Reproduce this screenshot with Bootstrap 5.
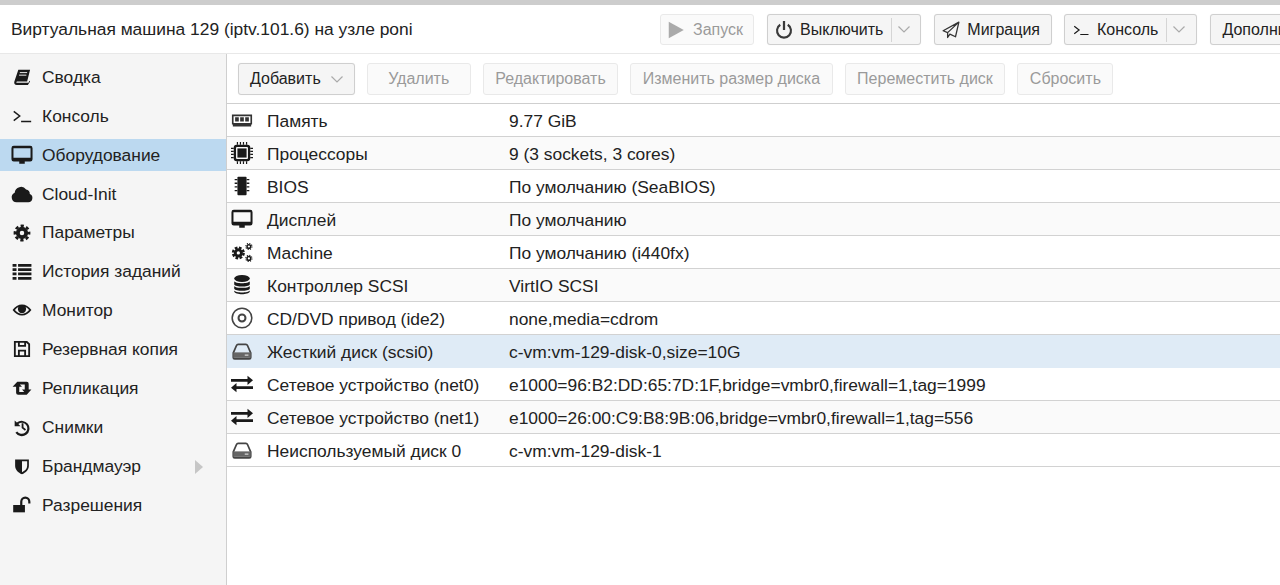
<!DOCTYPE html>
<html lang="ru">
<head>
<meta charset="utf-8">
<title>Виртуальная машина 129</title>
<link href="https://cdn.jsdelivr.net/npm/bootstrap@5.3.0/dist/css/bootstrap.min.css" rel="stylesheet">
<style>
html,body{height:585px;overflow:hidden}
body{font-family:"Liberation Sans",Arial,sans-serif;font-size:17.4px;color:#202020;background:#fff;border-top:5px solid #cdcdcd;display:flex;flex-direction:column}
.ic{width:22px;height:22px;flex:none;fill:#1a1a1a}
.head-bar{height:49px;border-bottom:1px solid #e8e8e8;padding:9px 0 8px 11px;white-space:nowrap;overflow:hidden;flex:none}
.head-title{width:649px;flex:none;color:#222}
.top-actions{gap:13px}
.px-btn{font-size:16px;height:31px;padding:0 11px;border:1px solid #cfcfcf;border-radius:3px;background:#f5f5f5;color:#222;display:inline-flex;align-items:center;justify-content:center;gap:7px;flex:none;white-space:nowrap;box-shadow:0 0 1px rgba(0,0,0,.1)}
.px-btn.with-ic{padding-left:7px}
.px-btn.run-btn{padding-right:10px}
.px-btn.term-btn{margin-left:-1px;padding-right:12px}
.px-btn.off{color:#9a9a9a;border-color:#e9e9e9;background:#fafafa;box-shadow:none}
.px-btn.off .ic{fill:#aaa}
.px-btn .ic{width:18px;height:18px}
.caret-split{border-left:1px solid #d5d5d5;height:24px;padding-left:6px;display:inline-flex;align-items:center;margin-right:-1px;margin-left:1px}
.caret-mark{width:12px;height:7px;stroke:#aaa;fill:none;stroke-width:1.2}
.main-wrap{flex:1;min-height:0}
.side-nav{width:227px;background:#f5f5f5;border-right:1px solid #cfcfcf;padding-top:7px;flex:none}
.side-link{height:32px;margin-bottom:6.88px;padding-left:11px;display:flex;align-items:center;gap:9px;color:#222;position:relative}
.side-link.on{background:#bcd9f0}
.side-arrow{position:absolute;left:195px;top:10px;width:0;height:0;border-left:8px solid #c6c6c6;border-top:7px solid transparent;border-bottom:7px solid transparent}
.tool-row{height:49px;padding:9px 0 0 11px;gap:12px;flex:none}
.tool-row .px-btn{height:32px;padding:0 11.5px}
.wide-min{min-width:104px}
.tool-row .add-btn{gap:10px;min-width:116px;padding:0 11px}
.hw-table{--bs-table-bg:transparent;margin:0;table-layout:fixed;border-top:1px solid #cfcfcf;color:#222}
.hw-table td{height:33px;padding:2px 0 0;border-bottom:1px solid #d2d2d2;vertical-align:middle;color:#222}
.hw-table tr:nth-child(even) td{background:#fafafa}
.hw-table tr.sel td{background:#dfebf6;border-bottom-color:#dfebf6}
.cell-ic{width:40px}
.hw-table td.cell-ic{padding:0 0 0 4px}
.cell-ic .ic{display:block}
.cell-name{width:242px}
</style>
</head>
<body>
<svg width="0" height="0" class="position-absolute">
<symbol id="i-term" viewBox="0 0 24 24"><path d="M3 7l6.500 5L3 17M11 18h11" fill="none" stroke="#1a1a1a" stroke-width="1.600"/></symbol>
<symbol id="i-book" viewBox="-3 -3 30 30"><path d="M7 2h16l-4 16H6c-1.500 0-2 1-1.500 1.700.3.300 1 .300 1.500.300h15l1-3 1 1-3 5H5c-3 0-4-2-3.500-4.500z"/><path d="M9 6h10M8 9.500h10" stroke="#f5f5f5" stroke-width="1.300"/></symbol>
<symbol id="i-mon" viewBox="0 0 24 24"><path fill-rule="evenodd" d="M3 2h18a2.500 2.500 0 0 1 2.500 2.500v12A2.500 2.500 0 0 1 21 19h-6v2.500H9V19H3a2.500 2.500 0 0 1-2.500-2.500v-12A2.500 2.500 0 0 1 3 2zm-.300 2.500V15h18.600V4.500z"/></symbol>
<symbol id="i-cloud" viewBox="0 0 24 24"><path d="M6 21a5.500 5.500 0 0 1-2-10.500A7 7 0 0 1 16.500 7 4.500 4.500 0 0 1 20.500 12 4.700 4.700 0 0 1 19 21z"/></symbol>
<symbol id="i-gear" viewBox="-5 -5 34 34"><circle cx="12" cy="12" r="6.500" fill="none" stroke="#1a1a1a" stroke-width="6"/><circle cx="12" cy="12" r="11" fill="none" stroke="#1a1a1a" stroke-width="4" stroke-dasharray="5 3.640" stroke-dashoffset="2.500"/></symbol>
<symbol id="i-list" viewBox="-2 -2 28 28"><path d="M0 3h5v3.500H0zM7 3h17v3.500H7zM0 8.500h5V12H0zM7 8.500h17V12H7zM0 14h5v3.500H0zM7 14h17v3.500H7zM0 19.500h5V23H0zM7 19.500h17V23H7z"/></symbol>
<symbol id="i-eye" viewBox="-2 -2 28 28"><path fill-rule="evenodd" d="M0 12c3-4.500 7.500-7 12-7s9 2.500 12 7c-3 4.500-7.500 7-12 7S3 16.500 0 12zm3 0c2.300 2.800 5.500 5 9 5s6.700-2.200 9-5c-1.200-1.500-2.700-2.800-4.300-3.700a5.300 5.300 0 1 1-9.400 0C5.700 9.200 4.200 10.500 3 12z"/></symbol>
<symbol id="i-save" viewBox="-3 -3 30 30"><path fill-rule="evenodd" d="M1 1h18l4 4v18H1zm2.500 2.500v17h3V13h11v7.500h3V6l-3-2.500V9H6.500V3.500zm5.500 12v5h6v-5zM9 3.500v3h6v-3z"/></symbol>
<symbol id="i-retw" viewBox="-2 -2 28 28"><path d="M6 4l6 6.500H8.500V17H15l3 3.500H7a2.500 2.500 0 0 1-2.500-2.500v-7.500H0zM6 4h12a2.500 2.500 0 0 1 2.500 2.500v7.500H24L18 20.500 12 14h3.500V7.500H9z"/></symbol>
<symbol id="i-hist" viewBox="-3 -3 30 30"><path d="M2 3l3 3a10.500 10.500 0 1 1-2 14l2.500-2a7.500 7.500 0 1 0 1.500-10l3 3H2z"/><path d="M11.500 7h2.500v5.500l3.500 2.500-1.500 2-4.500-3.500z"/></symbol>
<symbol id="i-shield" viewBox="-4 -4 32 32"><path fill-rule="evenodd" d="M2 2.500h20v9c0 6-4.500 10-10 12.500C6.500 21.500 2 17.500 2 11.500zM12 5v16c4-2 7.500-5 7.500-9.500V5z"/></symbol>
<symbol id="i-lock" viewBox="-3 -3 30 30"><path d="M0 12h16v10H0z"/><path d="M11 12V7.500a5.500 5.500 0 0 1 11 0V10" fill="none" stroke="#1a1a1a" stroke-width="3"/></symbol>
<symbol id="i-mem" viewBox="0 0 24 24"><path fill-rule="evenodd" d="M1 6h22v11h-1v2H2v-2H1zm1.800 1.800v7.400h18.400V7.800zM4.500 9h4v4.500h-4zm5.500 0h4v4.500h-4zm5.500 0h4v4.500h-4z" fill="#333"/></symbol>
<symbol id="i-cpu" viewBox="0 0 24 24"><path fill-rule="evenodd" d="M6 3h12a3 3 0 0 1 3 3v12a3 3 0 0 1-3 3H6a3 3 0 0 1-3-3V6a3 3 0 0 1 3-3zm.500 2.500a1 1 0 0 0-1 1v11a1 1 0 0 0 1 1h11a1 1 0 0 0 1-1v-11a1 1 0 0 0-1-1z"/><path d="M7 7h10v10H7z"/><path d="M7 0v3M10.300 0v3M13.600 0v3M17 0v3M7 21v3M10.300 21v3M13.600 21v3M17 21v3M0 7h3M0 10.300h3M0 13.600h3M0 17h3M21 7h3M21 10.300h3M21 13.600h3M21 17h3" stroke="#1a1a1a" stroke-width="1.300"/></symbol>
<symbol id="i-chip" viewBox="0 0 24 24"><rect x="7" y="2" width="10" height="20" rx="1"/><path d="M4 5h3M4 9h3M4 13h3M4 17h3M17 5h3M17 9h3M17 13h3M17 17h3" stroke="#1a1a1a" stroke-width="1.500"/></symbol>
<symbol id="i-gears" viewBox="0 0 24 24"><circle cx="8" cy="13" r="3.400" fill="none" stroke="#1a1a1a" stroke-width="3.200"/><circle cx="8" cy="13" r="5.800" fill="none" stroke="#1a1a1a" stroke-width="2.600" stroke-dasharray="2.900 1.650"/><circle cx="19.500" cy="6" r="2" fill="none" stroke="#1a1a1a" stroke-width="1.600"/><circle cx="19.500" cy="6" r="3.400" fill="none" stroke="#1a1a1a" stroke-width="1.100" stroke-dasharray="1.300 1.370"/><circle cx="19.500" cy="19" r="2" fill="none" stroke="#1a1a1a" stroke-width="1.600"/><circle cx="19.500" cy="19" r="3.400" fill="none" stroke="#1a1a1a" stroke-width="1.100" stroke-dasharray="1.300 1.370"/></symbol>
<symbol id="i-db" viewBox="0 0 24 24"><ellipse cx="12" cy="5" rx="8.500" ry="3.800"/><path d="M3.500 8c1.500 2.800 15.500 2.800 17 0v3.500c-1.500 3-15.500 3-17 0zM3.500 13c1.500 2.800 15.500 2.800 17 0v3c-1.500 3-15.500 3-17 0zM3.500 18c1.500 2.800 15.500 2.800 17 0v1c-1.500 4-15.500 4-17 0z"/></symbol>
<symbol id="i-cd" viewBox="0 0 24 24"><circle cx="12" cy="12" r="10.700" fill="none" stroke="#444" stroke-width="1.700"/><circle cx="12" cy="12" r="3.800" fill="none" stroke="#444" stroke-width="2.200"/></symbol>
<symbol id="i-hdd" viewBox="0 0 24 24"><path d="M2.500 14L6 6a2 2 0 0 1 2-1.200h8A2 2 0 0 1 18 6l3.500 8v5a1.500 1.500 0 0 1-1.500 1.500H4A1.500 1.500 0 0 1 2.500 19z" fill="none" stroke="#444" stroke-width="1.900"/><path d="M2.500 13.500h19v6h-19z" fill="#666"/><path d="M15 16.500h4" stroke="#ddd" stroke-width="1.300"/></symbol>
<symbol id="i-xch" viewBox="0 0 24 24"><path d="M0 6.500h18V3l6 5-6 5v-3.500H0zM24 14.500H6V11l-6 5 6 5v-3.500h18z"/></symbol>
<symbol id="i-play" viewBox="0 0 24 24"><path d="M1 1l20 11L1 23z"/></symbol>
<symbol id="i-pow" viewBox="0 0 24 24"><path d="M7 5a9.300 9.300 0 1 0 10 0" fill="none" stroke="#3a3a3a" stroke-width="2.800"/><path d="M10.500 0h3v12h-3z" fill="#3a3a3a"/></symbol>
<symbol id="i-plane" viewBox="0 0 24 24"><path d="M22.500 1.500L1.500 13l6 2.500M22.500 1.500L18 21l-7.500-3.500-3 4.500v-6.500zM7.500 15.500L22.500 1.500" fill="none" stroke="#333" stroke-width="1.700" stroke-linejoin="round"/></symbol>
<symbol id="i-caret" viewBox="0 0 12 7"><path d="M.5.500L6 6 11.500.500" fill="none" stroke="#aaa" stroke-width="1.200"/></symbol>
</svg>

<header class="head-bar d-flex align-items-center">
  <div class="head-title">Виртуальная машина 129 (iptv.101.6) на узле poni</div>
  <div class="d-flex top-actions">
    <button type="button" class="px-btn off with-ic run-btn"><svg class="ic"><use href="#i-play"/></svg>Запуск</button>
    <button type="button" class="px-btn with-ic"><svg class="ic"><use href="#i-pow"/></svg>Выключить<span class="caret-split"><svg class="caret-mark"><use href="#i-caret"/></svg></span></button>
    <button type="button" class="px-btn with-ic"><svg class="ic"><use href="#i-plane"/></svg>Миграция</button>
    <button type="button" class="px-btn with-ic term-btn"><svg class="ic"><use href="#i-term"/></svg>Консоль<span class="caret-split"><svg class="caret-mark"><use href="#i-caret"/></svg></span></button>
    <button type="button" class="px-btn">Дополнительно</button>
  </div>
</header>

<div class="main-wrap d-flex">
  <nav class="side-nav">
    <div class="side-link"><svg class="ic"><use href="#i-book"/></svg>Сводка</div>
    <div class="side-link"><svg class="ic"><use href="#i-term"/></svg>Консоль</div>
    <div class="side-link on"><svg class="ic"><use href="#i-mon"/></svg>Оборудование</div>
    <div class="side-link"><svg class="ic"><use href="#i-cloud"/></svg>Cloud-Init</div>
    <div class="side-link"><svg class="ic"><use href="#i-gear"/></svg>Параметры</div>
    <div class="side-link"><svg class="ic"><use href="#i-list"/></svg>История заданий</div>
    <div class="side-link"><svg class="ic"><use href="#i-eye"/></svg>Монитор</div>
    <div class="side-link"><svg class="ic"><use href="#i-save"/></svg>Резервная копия</div>
    <div class="side-link"><svg class="ic"><use href="#i-retw"/></svg>Репликация</div>
    <div class="side-link"><svg class="ic"><use href="#i-hist"/></svg>Снимки</div>
    <div class="side-link"><svg class="ic"><use href="#i-shield"/></svg>Брандмауэр<span class="side-arrow"></span></div>
    <div class="side-link"><svg class="ic"><use href="#i-lock"/></svg>Разрешения</div>
  </nav>
  <main class="flex-grow-1">
    <div class="tool-row d-flex">
      <button type="button" class="px-btn add-btn">Добавить<svg class="caret-mark"><use href="#i-caret"/></svg></button>
      <button type="button" class="px-btn off wide-min">Удалить</button>
      <button type="button" class="px-btn off">Редактировать</button>
      <button type="button" class="px-btn off">Изменить размер диска</button>
      <button type="button" class="px-btn off">Переместить диск</button>
      <button type="button" class="px-btn off">Сбросить</button>
    </div>
    <table class="table hw-table">
      <colgroup><col class="cell-ic"><col class="cell-name"><col></colgroup>
      <tbody>
        <tr><td class="cell-ic"><svg class="ic"><use href="#i-mem"/></svg></td><td>Память</td><td>9.77 GiB</td></tr>
        <tr><td class="cell-ic"><svg class="ic"><use href="#i-cpu"/></svg></td><td>Процессоры</td><td>9 (3 sockets, 3 cores)</td></tr>
        <tr><td class="cell-ic"><svg class="ic"><use href="#i-chip"/></svg></td><td>BIOS</td><td>По умолчанию (SeaBIOS)</td></tr>
        <tr><td class="cell-ic"><svg class="ic"><use href="#i-mon"/></svg></td><td>Дисплей</td><td>По умолчанию</td></tr>
        <tr><td class="cell-ic"><svg class="ic"><use href="#i-gears"/></svg></td><td>Machine</td><td>По умолчанию (i440fx)</td></tr>
        <tr><td class="cell-ic"><svg class="ic"><use href="#i-db"/></svg></td><td>Контроллер SCSI</td><td>VirtIO SCSI</td></tr>
        <tr><td class="cell-ic"><svg class="ic"><use href="#i-cd"/></svg></td><td>CD/DVD привод (ide2)</td><td>none,media=cdrom</td></tr>
        <tr class="sel"><td class="cell-ic"><svg class="ic"><use href="#i-hdd"/></svg></td><td>Жесткий диск (scsi0)</td><td>c-vm:vm-129-disk-0,size=10G</td></tr>
        <tr><td class="cell-ic"><svg class="ic"><use href="#i-xch"/></svg></td><td>Сетевое устройство (net0)</td><td>e1000=96:B2:DD:65:7D:1F,bridge=vmbr0,firewall=1,tag=1999</td></tr>
        <tr><td class="cell-ic"><svg class="ic"><use href="#i-xch"/></svg></td><td>Сетевое устройство (net1)</td><td>e1000=26:00:C9:B8:9B:06,bridge=vmbr0,firewall=1,tag=556</td></tr>
        <tr><td class="cell-ic"><svg class="ic"><use href="#i-hdd"/></svg></td><td>Неиспользуемый диск 0</td><td>c-vm:vm-129-disk-1</td></tr>
      </tbody>
    </table>
  </main>
</div>
<script src="https://cdn.jsdelivr.net/npm/bootstrap@5.3.0/dist/js/bootstrap.bundle.min.js"></script>
</body>
</html>
